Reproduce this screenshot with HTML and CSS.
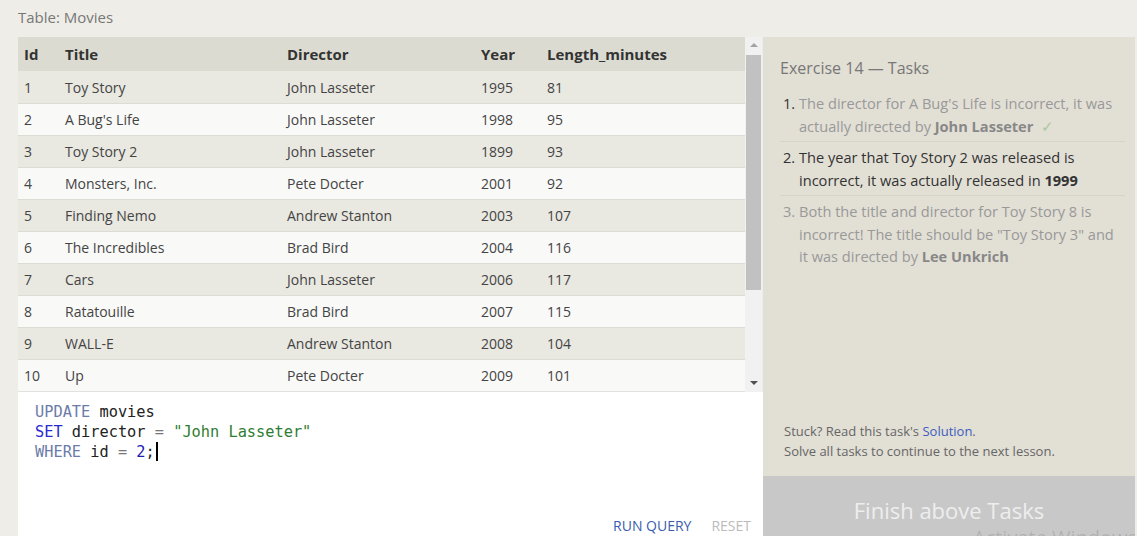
FILE: index.html
```html
<!DOCTYPE html>
<html>
<head>
<meta charset="utf-8">
<link rel="stylesheet" href="styles.css">
</head>
<body>
<div class="page">
  <div class="main">
    <div class="caption">Table: Movies</div>
    <div class="tablewrap">
      <div class="tablescroll">
        <table class="grid">
          <colgroup>
            <col class="c-id"><col class="c-title"><col class="c-dir"><col class="c-year"><col class="c-len">
          </colgroup>
          <thead>
            <tr><th>Id</th><th>Title</th><th>Director</th><th>Year</th><th>Length_minutes</th></tr>
          </thead>
          <tbody>
            <tr><td>1</td><td>Toy Story</td><td>John Lasseter</td><td>1995</td><td>81</td></tr>
            <tr><td>2</td><td>A Bug's Life</td><td>John Lasseter</td><td>1998</td><td>95</td></tr>
            <tr><td>3</td><td>Toy Story 2</td><td>John Lasseter</td><td>1899</td><td>93</td></tr>
            <tr><td>4</td><td>Monsters, Inc.</td><td>Pete Docter</td><td>2001</td><td>92</td></tr>
            <tr><td>5</td><td>Finding Nemo</td><td>Andrew Stanton</td><td>2003</td><td>107</td></tr>
            <tr><td>6</td><td>The Incredibles</td><td>Brad Bird</td><td>2004</td><td>116</td></tr>
            <tr><td>7</td><td>Cars</td><td>John Lasseter</td><td>2006</td><td>117</td></tr>
            <tr><td>8</td><td>Ratatouille</td><td>Brad Bird</td><td>2007</td><td>115</td></tr>
            <tr><td>9</td><td>WALL-E</td><td>Andrew Stanton</td><td>2008</td><td>104</td></tr>
            <tr><td>10</td><td>Up</td><td>Pete Docter</td><td>2009</td><td>101</td></tr>
          </tbody>
        </table>
        <div class="scrollbar">
          <div class="arrow up"></div>
          <div class="track"><div class="thumb"></div></div>
          <div class="arrow down"></div>
        </div>
      </div>
      <div class="editor">
        <div class="code">
          <div><span class="kw">UPDATE</span> movies</div>
          <div><span class="kw2">SET</span> director <span class="op">=</span> <span class="str">"John Lasseter"</span></div>
          <div><span class="kw">WHERE</span> id <span class="op">=</span> <span class="num">2</span>;<span class="cursor"></span></div>
        </div>
        <div class="actions">
          <span class="run">RUN QUERY</span>
          <span class="reset">RESET</span>
        </div>
      </div>
    </div>
  </div>
  <div class="side">
    <div class="tasks">
      <div class="tasks-title">Exercise 14 — Tasks</div>
      <ol class="tasklist">
        <li class="done"><span class="n">1.</span><span class="t">The director for A Bug's Life is incorrect, it was actually directed by <b>John Lasseter</b> <span class="check">✓</span></span></li>
        <li class="active"><span class="n">2.</span><span class="t">The year that Toy Story 2 was released is incorrect, it was actually released in <b>1999</b></span></li>
        <li class="todo"><span class="n">3.</span><span class="t">Both the title and director for Toy Story 8 is incorrect! The title should be "Toy Story 3" and it was directed by <b>Lee Unkrich</b></span></li>
      </ol>
      <div class="help">
        <div>Stuck? Read this task's <span class="link">Solution</span>.</div>
        <div>Solve all tasks to continue to the next lesson.</div>
      </div>
    </div>
    <div class="finish">
      <span>Finish above Tasks</span>
      <span class="watermark">Activate Windows</span>
    </div>
  </div>
</div>
</body>
</html>
```
FILE: styles.css
```css
* { box-sizing: border-box; }
html, body { margin: 0; padding: 0; }
body {
  background: #efede7;
  font-family: "Open Sans", "Noto Sans", sans-serif;
  color: #333;
  width: 1137px;
  height: 536px;
  overflow: hidden;
}
.page {
  display: flex;
  height: 536px;
}
.main {
  width: 763px;
  padding-left: 18px;
  display: flex;
  flex-direction: column;
}
.caption {
  height: 37px;
  padding-top: 6px;
  font-size: 15px;
  color: #777;
  line-height: 22px;
}
.tablewrap {
  flex: 1;
  display: flex;
  flex-direction: column;
}
.tablescroll {
  display: flex;
  height: 355px;
}
.grid {
  width: 727px;
  border-collapse: collapse;
  table-layout: fixed;
  font-size: 14px;
}
.c-id { width: 41px; }
.c-title { width: 222px; }
.c-dir { width: 194px; }
.c-year { width: 66px; }
.c-len { width: 204px; }
.grid th {
  background: #dcdbd1;
  height: 34px;
  text-align: left;
  font-weight: 700;
  font-size: 15px;
  padding: 0 6px;
  color: #333;
}
.grid td {
  height: 32px;
  padding: 1px 6px 0 6px;
  color: #444;
  border-bottom: 1px solid #dcdcd4;
}
.grid tbody tr:nth-child(odd) td { background: #e9e8e1; }
.grid tbody tr:nth-child(even) td { background: #f9f9f8; }
.grid tbody tr:last-child td { border-bottom: 1px solid #e2e2e2; }
.scrollbar {
  width: 17px;
  background: #f1f1f1;
  display: flex;
  flex-direction: column;
  align-items: center;
}
.arrow {
  width: 0; height: 0;
  margin: 5px 0;
  border-left: 4px solid transparent;
  border-right: 4px solid transparent;
}
.arrow.up { border-bottom: 4px solid #a3a3a3; margin-top: 6px; }
.arrow.down { border-top: 4px solid #505050; margin-bottom: 7px; }
.track {
  flex: 1;
  width: 100%;
  padding: 3px 1px 0 1px;
}
.thumb {
  width: 100%;
  height: 235px;
  background: #c1c1c1;
}
.editor {
  flex: 1;
  background: #fff;
  display: flex;
  flex-direction: column;
  justify-content: space-between;
}
.code {
  padding: 10px 0 0 17px;
  font-family: "DejaVu Sans Mono", "Liberation Mono", monospace;
  font-size: 15.3px;
  line-height: 20px;
  color: #222;
}
.kw { color: #6b7ca8; }
.kw2 { color: #2a2ad0; }
.op { color: #777; }
.str { color: #2e7d32; }
.num { color: #1c1cb0; }
.cursor {
  display: inline-block;
  width: 2px;
  height: 19px;
  background: #000;
  vertical-align: -4px;
  margin-left: 1px;
}
.actions {
  display: flex;
  justify-content: flex-end;
  gap: 20px;
  padding: 0 12px 0 0;
  font-size: 14px;
  height: 21px;
  line-height: 21px;
}
.run { color: #3b5dad; }
.reset { color: #bbb; }
.side {
  width: 372px;
  margin-top: 37px;
  display: flex;
  flex-direction: column;
}
.tasks {
  flex: 1;
  background: #e2dfd5;
  padding: 20px 10px 0 17px;
  display: flex;
  flex-direction: column;
}
.tasks-title {
  font-size: 16px;
  color: #777;
  line-height: 22px;
}
.tasklist {
  list-style: none;
  margin: 13px 0 0 0;
  padding: 0;
  font-size: 14.6px;
  line-height: 22.5px;
}
.tasklist li {
  display: flex;
  padding: 0 0 4px 3px;
  margin-bottom: 4px;
  border-bottom: 1px solid #d6d3c9;
}
.tasklist li:last-child { border-bottom: none; }
.tasklist .n { width: 16px; flex: none; color: #333; }
.tasklist .t { flex: 1; }
.done .t { color: #999; }
.done b { color: #888; }
.check { color: #a8c8a0; margin-left: 4px; }
.active .t { color: #333; }
.todo .n, .todo .t { color: #999; }
.todo b { color: #888; }
.help {
  margin-top: auto;
  padding-bottom: 15px;
  font-size: 13px;
  line-height: 20px;
  color: #666;
  padding-left: 4px;
}
.link { color: #3c5bbd; }
.finish {
  height: 60px;
  background: #c8c8c8;
  color: #eee;
  font-size: 22px;
  text-align: center;
  padding-top: 19px;
  position: relative;
  overflow: hidden;
}
.watermark {
  position: absolute;
  left: 210px;
  top: 48px;
  font-size: 20px;
  color: rgba(0,0,0,0.12);
  white-space: nowrap;
}
```
